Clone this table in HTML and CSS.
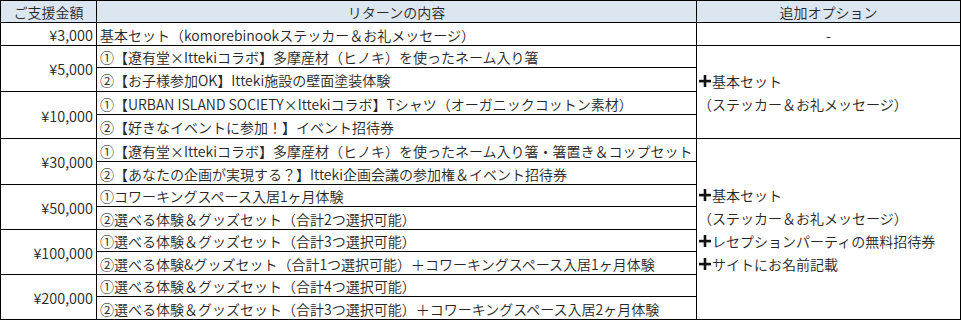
FILE: index.html
```html
<!DOCTYPE html>
<html lang="ja">
<head>
<meta charset="utf-8">
<title>リターン一覧</title>
<link rel="stylesheet" href="styles.css">
</head>
<body>
<div class="table">
  <div class="cell head">ご支援金額</div>
  <div class="cell head">リターンの内容</div>
  <div class="cell head">追加オプション</div>

  <div class="cell amount">¥3,000</div>
  <div class="cell ret">基本セット（komorebinookステッカー＆お礼メッセージ）</div>
  <div class="cell opt-single">-</div>

  <div class="cell amount span2">¥5,000</div>
  <div class="cell ret">①【遼有堂×Ittekiコラボ】多摩産材（ヒノキ）を使ったネーム入り箸</div>
  <div class="cell opt span4">
    <div class="opt-line"><svg class="plus" viewBox="0 0 14 14"><rect x="1" y="5.8" width="12" height="2.6"/><rect x="5.7" y="1" width="2.6" height="12"/></svg>基本セット</div>
    <div class="opt-line">（ステッカー＆お礼メッセージ）</div>
  </div>
  <div class="cell ret">②【お子様参加OK】Itteki施設の壁面塗装体験</div>

  <div class="cell amount span2">¥10,000</div>
  <div class="cell ret">①【URBAN ISLAND SOCIETY×Ittekiコラボ】Tシャツ（オーガニックコットン素材）</div>
  <div class="cell ret">②【好きなイベントに参加！】イベント招待券</div>

  <div class="cell amount span2">¥30,000</div>
  <div class="cell ret">①【遼有堂×Ittekiコラボ】多摩産材（ヒノキ）を使ったネーム入り箸・箸置き＆コップセット</div>
  <div class="cell opt span8">
    <div class="opt-line"><svg class="plus" viewBox="0 0 14 14"><rect x="1" y="5.8" width="12" height="2.6"/><rect x="5.7" y="1" width="2.6" height="12"/></svg>基本セット</div>
    <div class="opt-line">（ステッカー＆お礼メッセージ）</div>
    <div class="opt-line"><svg class="plus" viewBox="0 0 14 14"><rect x="1" y="5.8" width="12" height="2.6"/><rect x="5.7" y="1" width="2.6" height="12"/></svg>レセプションパーティの無料招待券</div>
    <div class="opt-line"><svg class="plus" viewBox="0 0 14 14"><rect x="1" y="5.8" width="12" height="2.6"/><rect x="5.7" y="1" width="2.6" height="12"/></svg>サイトにお名前記載</div>
  </div>
  <div class="cell ret">②【あなたの企画が実現する？】Itteki企画会議の参加権＆イベント招待券</div>

  <div class="cell amount span2">¥50,000</div>
  <div class="cell ret">①コワーキングスペース入居1ヶ月体験</div>
  <div class="cell ret">②選べる体験＆グッズセット（合計2つ選択可能）</div>

  <div class="cell amount span2">¥100,000</div>
  <div class="cell ret">①選べる体験＆グッズセット（合計3つ選択可能）</div>
  <div class="cell ret">②選べる体験&amp;グッズセット（合計1つ選択可能）＋コワーキングスペース入居1ヶ月体験</div>

  <div class="cell amount span2">¥200,000</div>
  <div class="cell ret">①選べる体験＆グッズセット（合計4つ選択可能）</div>
  <div class="cell ret">②選べる体験＆グッズセット（合計3つ選択可能）＋コワーキングスペース入居2ヶ月体験</div>
</div>
</body>
</html>
```
FILE: styles.css
```css
html, body {
  margin: 0;
  padding: 0;
  background: #fff;
}

.table {
  display: grid;
  grid-template-columns: 96px 600px 264px;
  grid-template-rows: 22px 23px 22px 24px 23px 24px 23px 23px 22px 23px 22px 23px 22px 23px;
  width: 961px;
  border-top: 1px solid #000;
  border-left: 1px solid #000;
  box-sizing: border-box;
  font-family: "Noto Sans CJK JP", "Noto Sans", sans-serif;
  font-size: 14px;
  font-weight: 350;
  color: #262626;
}

.cell {
  border-right: 1px solid #000;
  border-bottom: 1px solid #000;
  display: flex;
  align-items: center;
  white-space: nowrap;
  overflow: hidden;
  line-height: 20px;
  padding-top: 1px;
  box-sizing: border-box;
}

.head {
  background: #dce6f1;
  justify-content: center;
}

.amount {
  justify-content: flex-end;
  padding-right: 3px;
  font-size: 14.5px;
}

.ret {
  padding-left: 3px;
}

.opt-single {
  justify-content: center;
}

.span2 {
  grid-row: span 2;
}

.span4 {
  grid-row: span 4;
}

.span8 {
  grid-row: span 8;
}

.opt {
  flex-direction: column;
  align-items: flex-start;
  justify-content: center;
  padding-left: 1px;
}

.opt-line {
  display: flex;
  align-items: center;
  line-height: 23px;
}

.plus {
  width: 14px;
  height: 14px;
  fill: #111;
}
```
